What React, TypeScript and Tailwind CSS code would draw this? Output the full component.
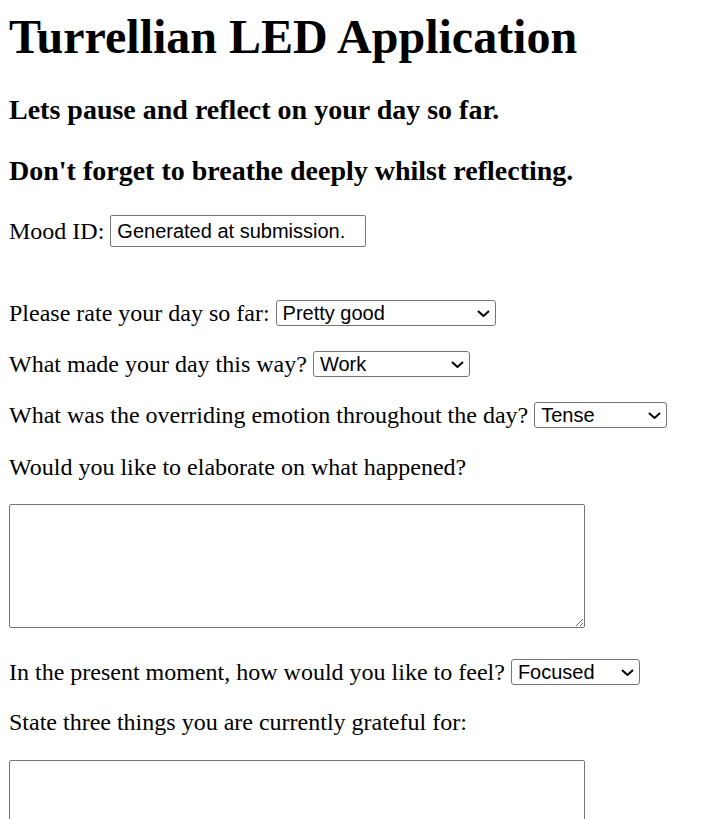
const serif = "font-['Liberation_Serif','Times_New_Roman',serif]";
const sans = "font-['Liberation_Sans',Arial,sans-serif]";

const Choice = ({ value, options, width }: { value: string; options: string[]; width: string }) => (
  <div className={`relative shrink-0 ${width} h-[26px]`}>
    <select
      defaultValue={value}
      className={`${sans} block appearance-none w-full h-[26px] border border-[#767676] rounded-[3px] bg-white pl-[6px] text-[20px] leading-[24px] text-black`}
    >
      {options.map((o) => (
        <option key={o}>{o}</option>
      ))}
    </select>
    <svg
      className="absolute right-[6px] top-[10px] pointer-events-none"
      width="13"
      height="7"
      viewBox="0 0 13 7"
      fill="none"
    >
      <path d="M1 1l5.5 5 5.5-5" stroke="#000" strokeWidth="2" />
    </svg>
  </div>
);

export default function App() {
  return (
    <div className={`${serif} bg-white text-black pl-[9px] min-h-screen`}>
      <h1 className="pt-[9px] text-[48px] leading-[55px] font-bold">Turrellian LED Application</h1>
      <h3 className="mt-[30px] text-[28px] leading-[32px] font-bold">Lets pause and reflect on your day so far.</h3>
      <h3 className="mt-[29px] text-[28px] leading-[32px] font-bold">Don't forget to breathe deeply whilst reflecting.</h3>

      <div className="mt-[28px] flex items-center h-[32px] text-[24px]">
        <span className="mr-[6px]">Mood ID:</span>
        <input
          readOnly
          defaultValue="Generated at submission."
          className={`${sans} w-[256px] h-[32px] border border-[#767676] rounded-[2px] px-[6px] text-[20px]`}
        />
      </div>

      <div className="mt-[52px] flex items-center h-[28px] text-[24px]">
        <span className="mr-[6px]">Please rate your day so far:</span>
        <Choice value="Pretty good" options={["Amazing", "Pretty good", "Okay", "Not great", "Terrible"]} width="w-[220px]" />
      </div>

      <div className="mt-[23px] flex items-center h-[28px] text-[24px]">
        <span className="mr-[6px]">What made your day this way?</span>
        <Choice value="Work" options={["Work", "Family", "Friends", "Health", "Other"]} width="w-[157px]" />
      </div>

      <div className="mt-[23px] flex items-center h-[28px] text-[24px]">
        <span className="mr-[6px]">What was the overriding emotion throughout the day?</span>
        <Choice value="Tense" options={["Happy", "Calm", "Tense", "Sad", "Angry"]} width="w-[133px]" />
      </div>

      <p className="mt-[24px] h-[28px] leading-[28px] text-[24px]">Would you like to elaborate on what happened?</p>

      <textarea className="mt-[23px] block w-[576px] h-[124px] border border-[#767676] rounded-[2px]" />

      <div className="mt-[30px] flex items-center h-[28px] text-[24px]">
        <span className="mr-[6px]">In the present moment, how would you like to feel?</span>
        <Choice value="Focused" options={["Focused", "Relaxed", "Energised", "Content"]} width="w-[129px]" />
      </div>

      <p className="mt-[22px] h-[28px] leading-[28px] text-[24px]">State three things you are currently grateful for:</p>

      <textarea className="mt-[24px] block w-[576px] h-[124px] border border-[#767676] rounded-[2px]" />
    </div>
  );
}
